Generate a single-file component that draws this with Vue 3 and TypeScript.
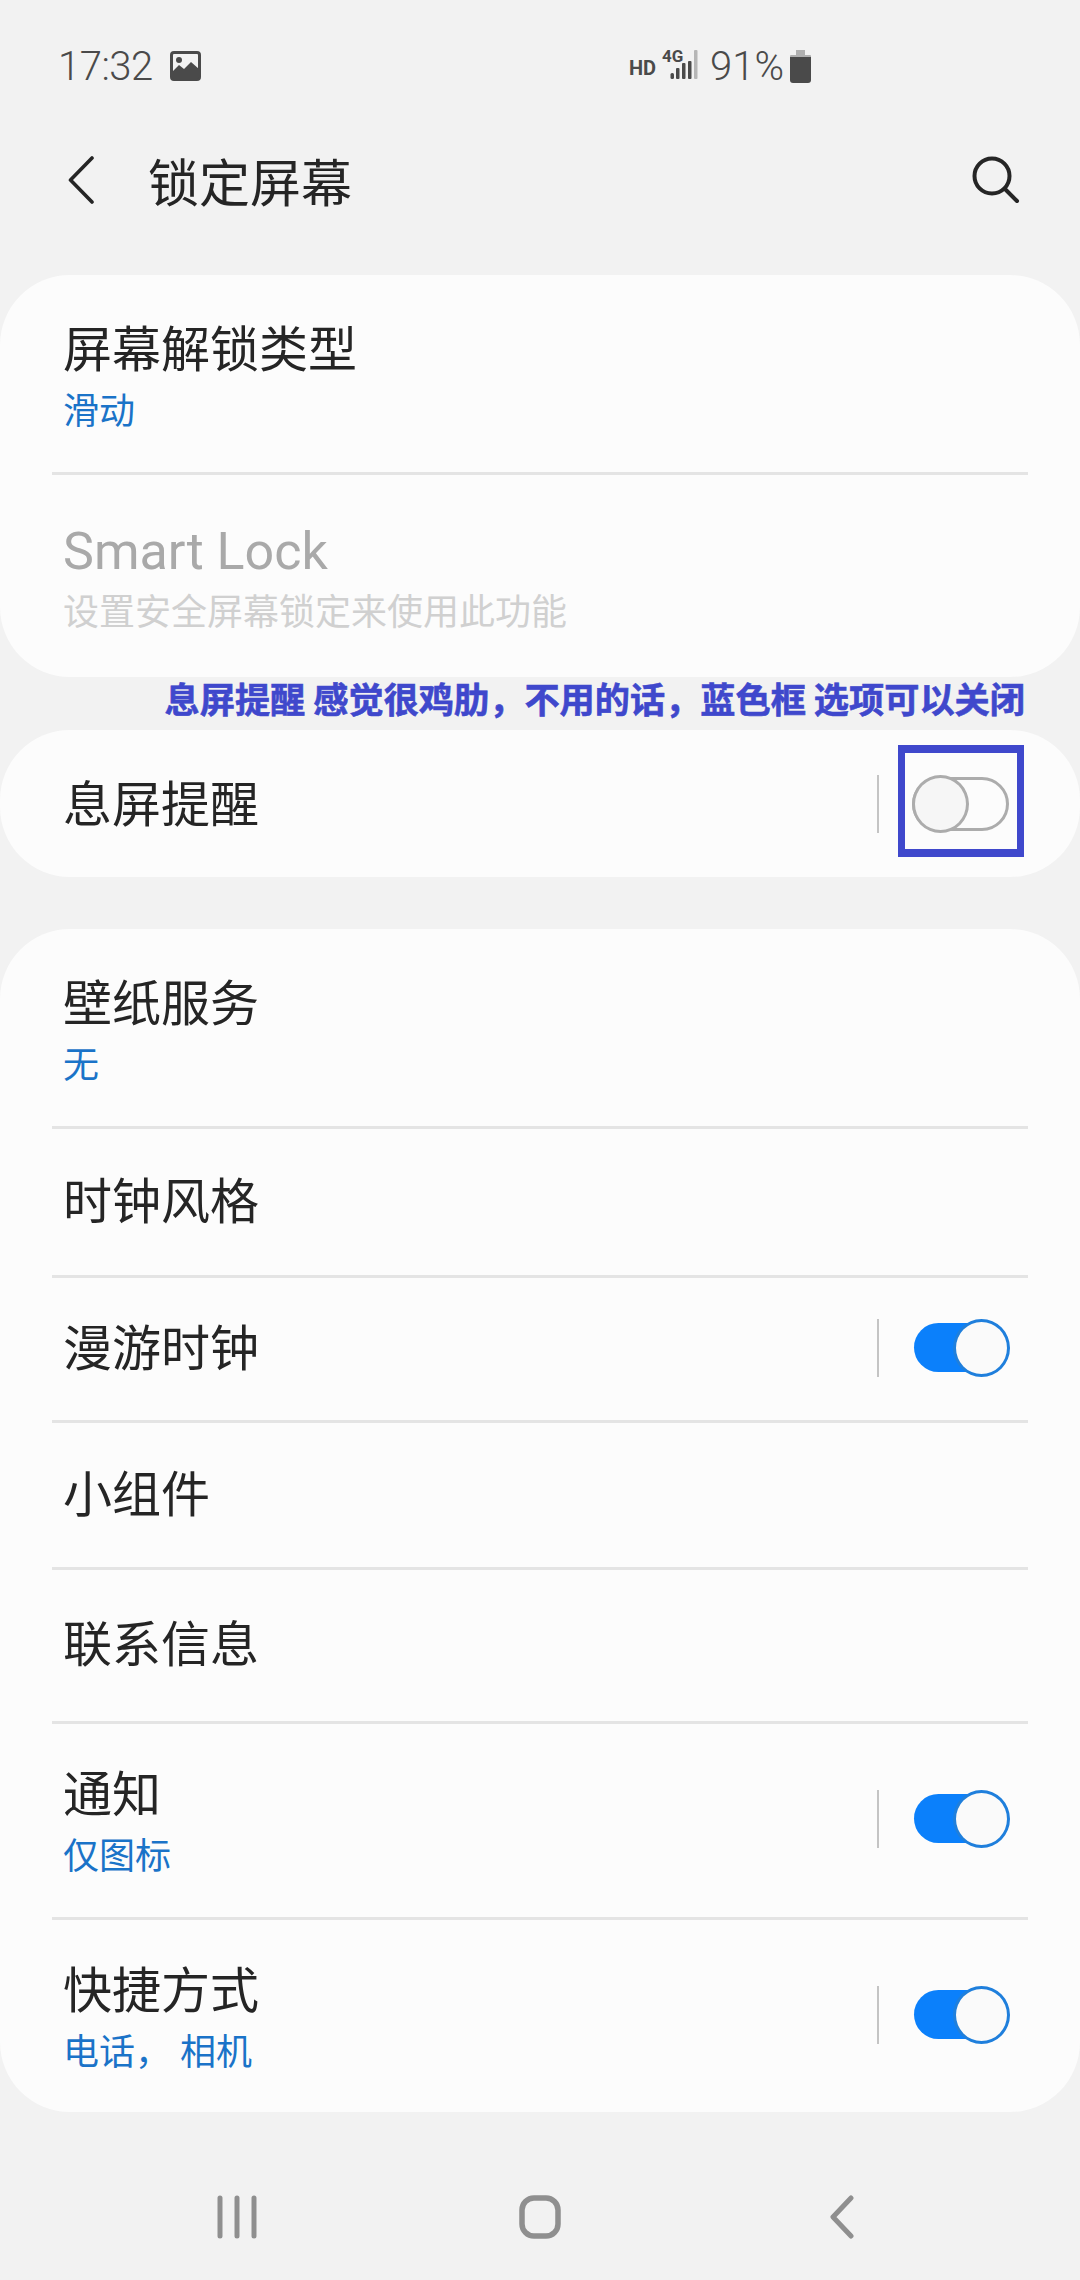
<template>
  <div class="screen">
    <div class="status">
      <div class="status-left">
        <span class="time">17:32</span>
        <svg class="pic" width="31" height="30" viewBox="0 0 31 30">
          <rect x="1.5" y="1.5" width="28" height="27" rx="2.5" fill="none" stroke="#4a4a4a" stroke-width="3" />
          <circle cx="9" cy="9" r="3" fill="#4a4a4a" />
          <path d="M2 26 V21 L9 14 L14 18 L21 11 L29 18 V26 Q29 28 27 28 H4 Q2 28 2 26 Z" fill="#4a4a4a" />
        </svg>
      </div>
      <div class="status-right">
        <span class="hd">HD</span>
        <svg class="signal" width="38" height="42" viewBox="0 0 38 42">
          <text x="0" y="20" class="net">4G</text>
          <rect x="8.5" y="31" width="3.5" height="6" rx="1.5" fill="#4a4a4a" />
          <rect x="14" y="26" width="3.5" height="11" rx="1" fill="#4a4a4a" />
          <rect x="20" y="21" width="3.5" height="16" rx="1" fill="#4a4a4a" />
          <rect x="26" y="19" width="3.5" height="18" rx="1" fill="#4a4a4a" />
          <rect x="32" y="8" width="3.5" height="29" rx="1" fill="#b6b6b6" />
        </svg>
        <span class="battery-text">91%</span>
        <svg class="battery" width="21" height="33" viewBox="0 0 21 33">
          <rect x="6" y="0" width="9" height="6" fill="#b0b0b0" />
          <rect x="0" y="5" width="21" height="3" rx="1" fill="#b0b0b0" />
          <path d="M0 7 H21 V30 Q21 33 18 33 H3 Q0 33 0 30 Z" fill="#4a4a4a" />
        </svg>
      </div>
    </div>

    <div class="header">
      <svg class="back" width="26" height="48" viewBox="0 0 26 48">
        <path d="M24 2 L2.5 24 L24 46" fill="none" stroke="#252525" stroke-width="3.6" stroke-linecap="round" stroke-linejoin="round" />
      </svg>
      <span class="page-title">锁定屏幕</span>
      <svg class="search" width="48" height="48" viewBox="0 0 48 48">
        <circle cx="20" cy="20" r="17.5" fill="none" stroke="#252525" stroke-width="4" />
        <path d="M33 33 L45 45" stroke="#252525" stroke-width="4" stroke-linecap="round" />
      </svg>
    </div>

    <template v-for="(card, i) in cards" :key="i">
      <div class="card">
        <div v-for="row in card" :key="row.title" class="row" :style="{ height: row.height + 'px' }">
          <div class="row-text" :class="{ double: row.sub }">
            <div class="row-title" :class="{ disabled: row.disabled }">{{ row.title }}</div>
            <div v-if="row.sub" class="row-sub" :class="{ disabled: row.disabled }">{{ row.sub }}</div>
          </div>
          <template v-if="row.toggle">
            <span class="row-sep"></span>
            <span class="toggle" :class="row.toggle">
              <span class="track"></span>
              <span class="thumb"></span>
              <span v-if="row.toggle === 'off'" class="mark"></span>
            </span>
          </template>
        </div>
      </div>
      <div v-if="i === 0" class="note">息屏提醒 感觉很鸡肋，不用的话，蓝色框 选项可以关闭</div>
      <div v-if="i === 1" class="gap"></div>
    </template>

    <div class="nav">
      <svg width="42" height="44" viewBox="0 0 42 44">
        <path d="M4 3 V41 M21 3 V41 M38 3 V41" stroke="#8f8f8f" stroke-width="5" stroke-linecap="round" />
      </svg>
      <svg width="42" height="44" viewBox="0 0 42 44">
        <rect x="3" y="3" width="36" height="38" rx="12" fill="none" stroke="#8f8f8f" stroke-width="5.5" />
      </svg>
      <svg width="42" height="44" viewBox="-8 0 42 44">
        <path d="M22 3 L4 22 L22 41" fill="none" stroke="#8f8f8f" stroke-width="5" stroke-linecap="round" stroke-linejoin="round" />
      </svg>
    </div>
  </div>
</template>

<script setup lang="ts">
interface Row {
  title: string
  sub?: string
  height: number
  disabled?: boolean
  toggle?: 'on' | 'off'
}

const cards: Row[][] = [
  [
    { title: '屏幕解锁类型', sub: '滑动', height: 197 },
    { title: 'Smart Lock', sub: '设置安全屏幕锁定来使用此功能', height: 205, disabled: true },
  ],
  [{ title: '息屏提醒', height: 147, toggle: 'off' }],
  [
    { title: '壁纸服务', sub: '无', height: 197 },
    { title: '时钟风格', height: 149 },
    { title: '漫游时钟', height: 145, toggle: 'on' },
    { title: '小组件', height: 147 },
    { title: '联系信息', height: 154 },
    { title: '通知', sub: '仅图标', height: 196, toggle: 'on' },
    { title: '快捷方式', sub: '电话， 相机', height: 195, toggle: 'on' },
  ],
]
</script>

<style>
html,
body {
  background: #f2f2f2;
}
</style>

<style scoped>
.screen {
  width: 1080px;
  height: 2280px;
  overflow: hidden;
  background: #f2f2f2;
  font-family: Roboto, "Noto Sans CJK SC", sans-serif;
  color: #252525;
}

.status {
  height: 132px;
  display: flex;
  align-items: center;
  justify-content: space-between;
  padding: 0 269px 0 58px;
  color: #4a4a4a;
}

.status-left,
.status-right {
  display: flex;
  align-items: center;
}

.time {
  font-size: 40px;
  font-weight: 300;
  letter-spacing: -0.5px;
}

.pic {
  margin-left: 17px;
}

.hd {
  font-size: 20px;
  font-weight: 700;
  margin-right: 6px;
  margin-top: 3px;
}

.net {
  font-family: Roboto, sans-serif;
  font-size: 17px;
  font-weight: 700;
  fill: #4a4a4a;
}

.signal {
  margin-top: -6px;
}

.battery-text {
  font-size: 40px;
  font-weight: 300;
  margin-left: 10px;
  margin-right: 6px;
}

.header {
  height: 96px;
  margin-bottom: 47px;
  padding: 0 60px 0 68px;
  display: flex;
  align-items: center;
}

.page-title {
  font-size: 51px;
  margin-left: 54px;
  flex: 1;
}

.card {
  background: #fcfcfc;
  border-radius: 70px;
}

.row {
  margin: 0 52px;
  padding: 0 18px 0 11px;
  display: flex;
  align-items: center;
  box-sizing: border-box;
  box-shadow: inset 0 3px 0 #e4e4e4;
}

.row:first-child {
  box-shadow: none;
}

.row-text {
  flex: 1;
  padding-top: 4px;
}

.row-text.double {
  padding-top: 12px;
}

.row-title {
  font-size: 49px;
  line-height: 64px;
}

.row-sub {
  font-size: 36px;
  line-height: 58px;
  color: #1a73c8;
}

.row-title.disabled {
  font-size: 52px;
  color: #a9a9a9;
}

.row-sub.disabled {
  color: #d0d0d0;
}

.row-sep {
  width: 2px;
  height: 58px;
  background: #c4c4c4;
  margin-right: 35px;
}

.toggle {
  position: relative;
  width: 96px;
  height: 58px;
}

.track {
  position: absolute;
  left: 0;
  right: 2px;
  top: 4px;
  bottom: 5px;
  border-radius: 25px;
  background: #0b80fb;
}

.thumb {
  position: absolute;
  top: 0;
  right: 0;
  width: 57px;
  height: 58px;
  box-sizing: border-box;
  border: 3px solid #1f7fdc;
  border-radius: 50%;
  background: #fafafa;
}

.toggle.off .track {
  background: #fcfcfc;
  border: 3px solid #acacac;
  top: 2px;
  bottom: 2px;
  left: -2px;
  right: 1px;
  border-radius: 27px;
}

.toggle.off .thumb {
  left: -2px;
  right: auto;
  border-color: #acacac;
  background: #f6f6f6;
}

/* annotation box drawn over the switch */
.mark {
  position: absolute;
  left: -16px;
  top: -30px;
  width: 126px;
  height: 112px;
  box-sizing: border-box;
  border: solid #3f48cc;
  border-width: 8px 7px;
}

.note {
  height: 53px;
  box-sizing: border-box;
  padding: 0 55px 0 0;
  text-align: right;
  font-size: 35.2px;
  line-height: 42px;
  font-weight: 700;
  color: #3f48cc;
  -webkit-text-stroke: 0.6px #3f48cc;
  white-space: nowrap;
  font-family: "Noto Sans CJK SC", sans-serif;
}

.gap {
  height: 52px;
}

.nav {
  height: 168px;
  box-sizing: border-box;
  padding: 42px 217px 0 216px;
  display: flex;
  align-items: center;
  justify-content: space-between;
}
</style>
